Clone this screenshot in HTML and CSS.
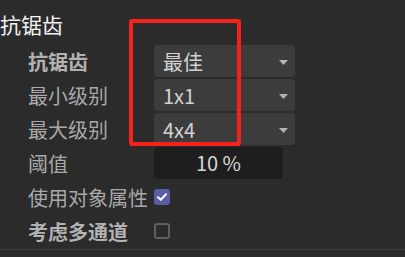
FILE: index.html
```html
<!DOCTYPE html>
<html lang="zh-CN">
<head>
  <meta charset="UTF-8" />
  <title>抗锯齿</title>
  <link rel="stylesheet" href="styles.css">
</head>
<body>

  <div class="panel">
    <h2 class="section-title">抗锯齿</h2>

    <div class="row">
      <label class="prop bold">抗锯齿</label>
      <div class="select">
        <span>最佳</span>
        <svg class="caret" width="9" height="5" viewBox="0 0 9 5"><path d="M0 0H9L4.5 5Z" fill="#b4b4b4"/></svg>
      </div>
    </div>

    <div class="row">
      <label class="prop">最小级别</label>
      <div class="select">
        <span>1x1</span>
        <svg class="caret" width="9" height="5" viewBox="0 0 9 5"><path d="M0 0H9L4.5 5Z" fill="#b4b4b4"/></svg>
      </div>
    </div>

    <div class="row">
      <label class="prop">最大级别</label>
      <div class="select">
        <span>4x4</span>
        <svg class="caret" width="9" height="5" viewBox="0 0 9 5"><path d="M0 0H9L4.5 5Z" fill="#b4b4b4"/></svg>
      </div>
    </div>

    <div class="row">
      <label class="prop">阈值</label>
      <div class="number">10 %</div>
    </div>

    <div class="row">
      <label class="prop">使用对象属性</label>
      <div class="check checked">
        <svg width="10" height="8" viewBox="0 0 10 8"><path d="M1 4.2L3.8 6.8L9 1.2" fill="none" stroke="#fff" stroke-width="2" stroke-linecap="round" stroke-linejoin="round"/></svg>
      </div>
    </div>

    <div class="row">
      <label class="prop bold">考虑多通道</label>
      <div class="check"></div>
    </div>

    <div class="divider"></div>

    <div class="highlight"></div>
  </div>

</body>
</html>
```

FILE: styles.css
```css
body {
  margin: 0;
  background: #2b2b2b;
  font-family: "Noto Sans CJK SC", "Noto Sans", sans-serif;
  overflow: hidden;
}

.panel {
  position: relative;
  width: 405px;
  height: 257px;
}

.section-title {
  margin: 0;
  padding-top: 10px;
  height: 35px;
  line-height: 28px;
  font-size: 21px;
  font-weight: normal;
  color: #f2f2f2;
  box-sizing: content-box;
}

.row {
  display: flex;
  align-items: center;
  height: 32px;
  margin-bottom: 2px;
  padding-left: 28px;
}

.prop {
  width: 126px;
  font-size: 20px;
  color: #a9a9a9;
  white-space: nowrap;
}

.prop.bold {
  font-weight: bold;
  color: #b2b2b2;
}

.select {
  display: flex;
  align-items: center;
  justify-content: space-between;
  width: 141px;
  height: 32px;
  padding: 0 7px 0 9px;
  box-sizing: border-box;
  background: #3c3c3c;
  border-radius: 4px;
  font-size: 20px;
  color: #d2d2d2;
}

.caret {
  margin-top: 3px;
}

.number {
  width: 129px;
  height: 32px;
  line-height: 32px;
  background: #1e1e1e;
  border-radius: 4px;
  text-align: center;
  font-size: 20px;
  color: #d6d6d6;
}

.check {
  display: flex;
  align-items: center;
  justify-content: center;
  width: 16px;
  height: 16px;
  box-sizing: border-box;
  border: 2px solid #5e5e5e;
  border-radius: 3px;
}

.check.checked {
  background: #5b5ba6;
  border: none;
}

.divider {
  margin-top: 2px;
  border-top: 1px solid #3a3a3a;
}

.highlight {
  position: absolute;
  left: 129px;
  top: 19px;
  width: 112px;
  height: 127px;
  box-sizing: border-box;
  border: 4px solid #f5211a;
  border-radius: 3px;
}
```
